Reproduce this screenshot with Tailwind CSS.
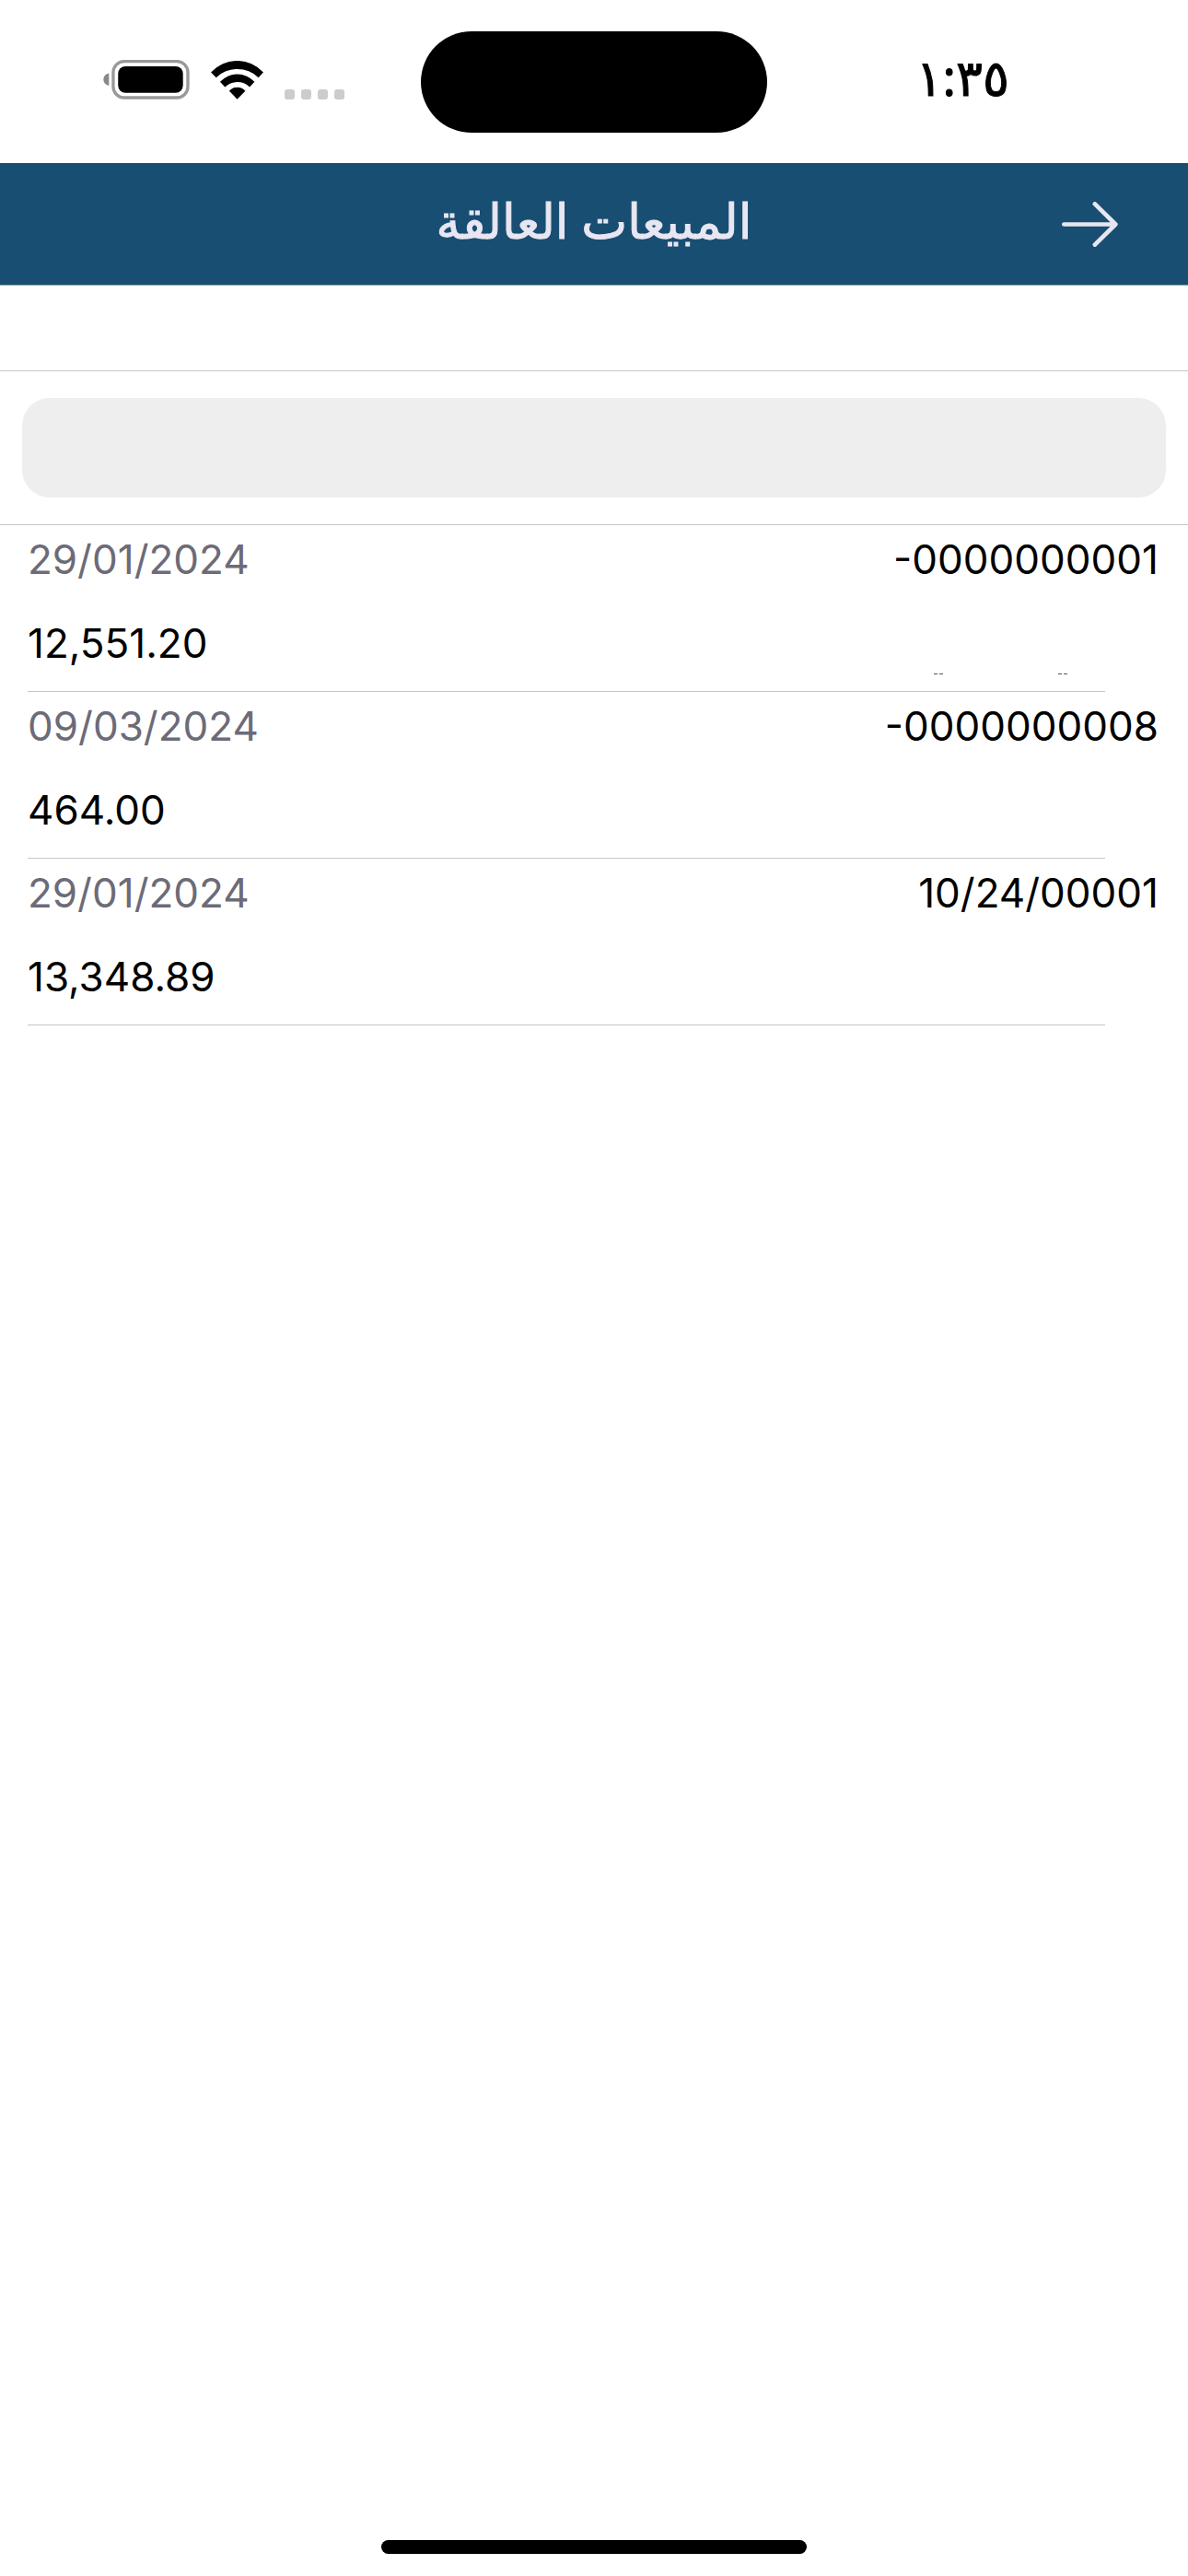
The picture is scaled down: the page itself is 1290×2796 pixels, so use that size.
<!DOCTYPE html>
<html lang="ar" dir="rtl">
<head>
    <meta charset="UTF-8">
    <meta name="viewport" content="width=device-width, initial-scale=1.0">
    <title>المبيعات العالقة</title>
    <script src="https://cdn.jsdelivr.net/npm/@tailwindcss/browser@4"></script>
</head>
<body class="min-h-screen flex flex-col bg-white text-black font-['Noto_Sans','DejaVu_Sans',sans-serif]">

    <!-- Status bar -->
    <div class="grid grid-cols-[1fr_auto_1fr] items-center h-[177px]">
        <div class="ps-[194px] pb-3 text-[54px] leading-[60px] [-webkit-text-stroke:1px_currentColor]">١:٣٥</div>
        <div class="w-[376px] h-[110px] rounded-full bg-black"></div>
        <div dir="ltr" class="flex items-end gap-[23px] ps-[112px] pb-1">
            <svg class="w-[94px] h-[43px]" viewBox="66 75 282 130">
                <rect x="98" y="80" width="245" height="119" rx="36" fill="none" stroke="#999" stroke-width="10"/>
                <rect x="114" y="96" width="213" height="87" rx="24"/>
                <path d="M84 119C60 124 60 155 84 160Z" fill="#888"/>
            </svg>
            <svg class="w-[57px] h-[42px]" viewBox="416 75 172 127">
                <path d="M416 113A116 116 0 0 1 588 113L572 130A100 100 0 0 0 433 130Z"/>
                <path d="M446 144A76 76 0 0 1 559 144L543 161A59 59 0 0 0 462 161Z"/>
                <path d="M476 174A35 35 0 0 1 529 174L502 201Z"/>
            </svg>
            <div class="flex gap-[7px]">
                <span class="size-[11px] rounded-[3px] bg-[#ccc]"></span>
                <span class="size-[11px] rounded-[3px] bg-[#ccc]"></span>
                <span class="size-[11px] rounded-[3px] bg-[#ccc]"></span>
                <span class="size-[11px] rounded-[3px] bg-[#ccc]"></span>
            </div>
        </div>
    </div>

    <header class="grid grid-cols-[1fr_auto_1fr] items-center h-[133px] border-b border-[#8ba6b7] bg-[#184e71] text-[#e8e6f2]">
        <button type="button" aria-label="رجوع" class="justify-self-start ms-[76px]">
            <svg class="w-[61px] h-[49px]" viewBox="158 146 182 146" fill="none" stroke="currentColor" stroke-width="14" stroke-linecap="round" stroke-linejoin="round">
                <path d="M165 219H332M265 153L332 219L265 285"/>
            </svg>
        </button>
        <h1 class="pb-2 text-[53px] leading-[70px] [-webkit-text-stroke:1px_currentColor]">المبيعات العالقة</h1>
        <div></div>
    </header>

    <div class="h-[92px]"></div>

    <form class="border-y border-[#c6c6c8] px-6 py-[29px]">
        <input type="search" aria-label="بحث" class="block w-full h-[108px] rounded-[30px] bg-[#eee] px-8 text-[44px] outline-none">
    </form>

    <!-- Pending sales -->
    <ul class="grow font-['Inter','Noto_Sans',sans-serif] text-[44px] leading-[74px]">
        <li>
            <div class="flex justify-between ps-8 pe-[30px]">
                <span dir="ltr">-0000000001</span>
                <span dir="ltr" class="text-[#6c6b78]">29/01/2024</span>
            </div>
            <div class="flex justify-between ps-8 pe-[30px] mt-[17px]">
                <span class="flex items-end gap-[125px] ps-[99px] pb-[3px]">
                    <span class="flex gap-[2px]"><i class="w-1 h-px bg-[#555]"></i><i class="w-1 h-px bg-[#555]"></i></span>
                    <span class="flex gap-[2px]"><i class="w-1 h-px bg-[#555]"></i><i class="w-1 h-px bg-[#555]"></i></span>
                </span>
                <span dir="ltr">12,551.20</span>
            </div>
            <div class="mt-[15px] ms-[90px] me-[30px] h-px bg-[#c6c6c8]"></div>
        </li>
        <li>
            <div class="flex justify-between ps-8 pe-[30px]">
                <span dir="ltr">-0000000008</span>
                <span dir="ltr" class="text-[#6c6b78]">09/03/2024</span>
            </div>
            <div class="flex justify-end ps-8 pe-[30px] mt-[17px]">
                <span dir="ltr">464.00</span>
            </div>
            <div class="mt-[15px] ms-[90px] me-[30px] h-px bg-[#c6c6c8]"></div>
        </li>
        <li>
            <div class="flex justify-between ps-8 pe-[30px]">
                <span dir="ltr">10/24/00001</span>
                <span dir="ltr" class="text-[#6c6b78]">29/01/2024</span>
            </div>
            <div class="flex justify-end ps-8 pe-[30px] mt-[17px]">
                <span dir="ltr">13,348.89</span>
            </div>
            <div class="mt-[15px] ms-[90px] me-[30px] h-px bg-[#c6c6c8]"></div>
        </li>
    </ul>

    <!-- Home indicator -->
    <div class="w-[462px] h-[15px] mx-auto mb-6 rounded-full bg-black"></div>

</body>
</html>
